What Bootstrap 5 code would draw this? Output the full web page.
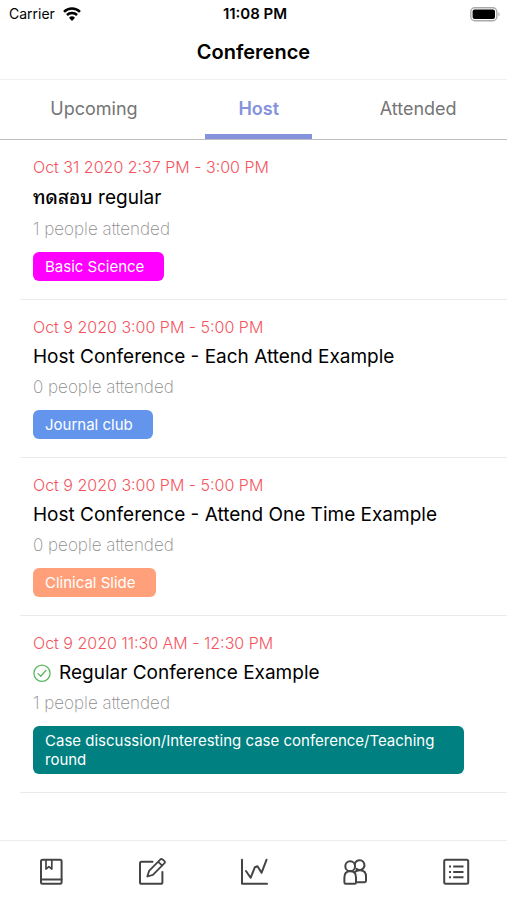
<!DOCTYPE html>
<html lang="en">
<head>
<meta charset="utf-8">
<meta name="viewport" content="width=device-width, initial-scale=1">
<title>Conference</title>
<link href="https://cdn.jsdelivr.net/npm/bootstrap@5.3.0/dist/css/bootstrap.min.css" rel="stylesheet">
<style>
body { font-family: Inter, "Noto Sans", sans-serif; color: #000; background: #fff; }
.status { font-size: 14px; line-height: 20px; padding: 4px 6px 2px 9px; }
.clock { font-size: 15px; }
.page-title { font-size: 20px; line-height: 28px; padding: 12px 0 13px; border-bottom: 1px solid #f1f1f1; }
.tabs { border-bottom: 1px solid #bdbdc2; }
.tab-item { font-size: 18px; line-height: 24px; padding: 17px 33px 13px; border: 0; border-bottom: 5px solid transparent; background: none; color: #757575; }
.tab-item.active { color: #8592dc; border-color: #8592dc; font-weight: 600; }
.conf { margin-left: 20px; padding: 12px 43px 18px 13px; border-bottom: 1px solid #ebebeb; }
.when { font-size: 16px; line-height: 30px; font-weight: 300; color: #f4545e; }
.topic { font-size: 19px; line-height: 30px; font-weight: 400; }
.topic-thai { line-height: 32px; }
.topic-thai span { font-family: "Noto Sans Thai Looped", "Noto Looped Thai", Loma, Waree, Garuda, Umpush, Norasi, sans-serif; font-weight: 500; line-height: 1; }
.people { font-size: 17px; line-height: 30px; font-weight: 200; color: #8e8e8e; }
.tag { font-size: 15px; line-height: 19px; padding: 5px 20px 5px 12px; border-radius: 6px; color: #fff; }
.tag-basic { background: #ff00ff; }
.tag-journal { background: #6495ed; }
.tag-slide { background: #ffa07a; }
.tag-case { background: #008080; }
.bottom-bar { border-top: 1px solid #ededed; }
.bottom-bar a { color: #444; padding: 17px 0 14px; line-height: 1; }
.bottom-bar svg { display: block; margin: 0 auto; fill: none; stroke: currentColor; stroke-width: 2; stroke-linejoin: round; stroke-linecap: round; }
</style>
<script src="https://cdn.jsdelivr.net/npm/bootstrap@5.3.0/dist/js/bootstrap.bundle.min.js"></script>
</head>
<body class="d-flex flex-column min-vh-100">
<header>
  <div class="status d-flex align-items-center">
    <div class="col d-flex align-items-center gap-2"><span>Carrier</span>
      <svg width="18" height="14" viewBox="0 0 18 14" fill="none" stroke="#000" stroke-width="2.5" aria-hidden="true"><path d="M1 4.800a11.600 11.600 0 0 1 16 0M3.900 8a7.400 7.400 0 0 1 10.200 0"/><path d="M9 14 6 10.800a4.300 4.300 0 0 1 6 0z" fill="#000" stroke="none"/></svg>
    </div>
    <div class="clock fw-semibold">11:08 PM</div>
    <div class="col d-flex justify-content-end">
      <svg width="31" height="15" viewBox="0 0 31 15" aria-label="Battery full"><rect x=".8" y=".8" width="26" height="13" rx="4" fill="#fff" stroke="#aaa" stroke-width="1.4"/><rect x="2.6" y="2.6" width="22.4" height="9.4" rx="2" fill="#000"/><path d="M28.400 5.200q2.600 2.100 0 4.200z" fill="#aaa"/></svg>
    </div>
  </div>
  <h1 class="page-title fw-semibold text-center m-0">Conference</h1>
  <div class="tabs d-flex justify-content-around" role="tablist">
    <button class="tab-item" type="button" role="tab" aria-selected="false">Upcoming</button>
    <button class="tab-item active" type="button" role="tab" aria-selected="true">Host</button>
    <button class="tab-item" type="button" role="tab" aria-selected="false">Attended</button>
  </div>
</header>
<main class="flex-grow-1">
  <article class="conf d-flex flex-column align-items-start">
    <div class="when">Oct 31 2020 2:37 PM - 3:00 PM</div>
    <h2 class="topic topic-thai m-0"><span lang="th">ทดสอบ</span> regular</h2>
    <div class="people">1 people attended</div>
    <span class="tag tag-basic mt-2">Basic Science</span>
  </article>
  <article class="conf d-flex flex-column align-items-start">
    <div class="when">Oct 9 2020 3:00 PM - 5:00 PM</div>
    <h2 class="topic m-0">Host Conference - Each Attend Example</h2>
    <div class="people">0 people attended</div>
    <span class="tag tag-journal mt-2">Journal club</span>
  </article>
  <article class="conf d-flex flex-column align-items-start">
    <div class="when">Oct 9 2020 3:00 PM - 5:00 PM</div>
    <h2 class="topic m-0">Host Conference - Attend One Time Example</h2>
    <div class="people">0 people attended</div>
    <span class="tag tag-slide mt-2">Clinical Slide</span>
  </article>
  <article class="conf d-flex flex-column align-items-start">
    <div class="when">Oct 9 2020 11:30 AM - 12:30 PM</div>
    <h2 class="topic d-flex align-items-center gap-2 m-0">
      <svg width="18" height="18" viewBox="0 0 18 18" fill="none" stroke="#5cb860" stroke-width="1.3" stroke-linecap="round" stroke-linejoin="round" aria-hidden="true"><circle cx="9" cy="9.2" r="8.1"/><path d="m5 9.600 2.800 2.700 5.200-6"/></svg>
      Regular Conference Example</h2>
    <div class="people">1 people attended</div>
    <span class="tag tag-case mt-2">Case discussion/Interesting case conference/Teaching round</span>
  </article>
</main>
<nav class="bottom-bar d-flex sticky-bottom bg-white" aria-label="Main">
  <a class="col" href="#" aria-label="Library"><svg width="28" height="28" viewBox="0 0 28 28"><rect x="4" y="1.800" width="20.600" height="24" rx="1.500"/><path d="M4.500 21.500h20"/><path stroke-width="1.700" d="M9 2v9l2.900-2.300 2.900 2.300V2"/></svg></a>
  <a class="col" href="#" aria-label="Write"><svg width="28" height="28" viewBox="0 0 28 28"><path d="M14.500 3.800H3.600Q2 3.800 2 5.400v18.800q0 1.600 1.600 1.600h19.200q1.600 0 1.600-1.600V14"/><path stroke-width="1.800" d="m9.300 18.500 1.800-5.600L22.200 1.600q1.200-1.200 2.600 0l1.500 1.300q1.200 1.300 0 2.500L14.900 16.800zM20.300 3.800l3.900 3.900"/></svg></a>
  <a class="col" href="#" aria-label="Statistics"><svg width="28" height="28" viewBox="0 0 28 28"><path d="M2 1.800v24h25M6 13l4.600 6.800 4.200-10.500 2.700-1 4 6.500L26.500 1.800"/></svg></a>
  <a class="col" href="#" aria-label="People"><svg width="28" height="28" viewBox="0 0 28 28"><circle cx="9.200" cy="8.200" r="4.900"/><path d="M13.700 6.300a4.900 4.900 0 1 1 1.800 4.600"/><path d="M3.400 24.500V19.500q0-6.200 5.800-6.200t5.800 6.200v5q0 1.300-1.300 1.300h-9q-1.300 0-1.300-1.300zM13.500 14.300q2.300-2.400 6-2.100 5.500.6 5.500 6.100v4.500q0 1.400-1.300 1.400H15"/></svg></a>
  <a class="col" href="#" aria-label="List"><svg width="28" height="28" viewBox="0 0 28 28"><rect x="2.200" y="1.800" width="24" height="24" rx="1.500"/><path stroke-linecap="butt" d="M7 8.500h2M11.200 8.500h10.300M7 13.900h2M11.200 13.900h10.300M7 19.300h2M11.200 19.300h10.300"/></svg></a>
</nav>
</body>
</html>
